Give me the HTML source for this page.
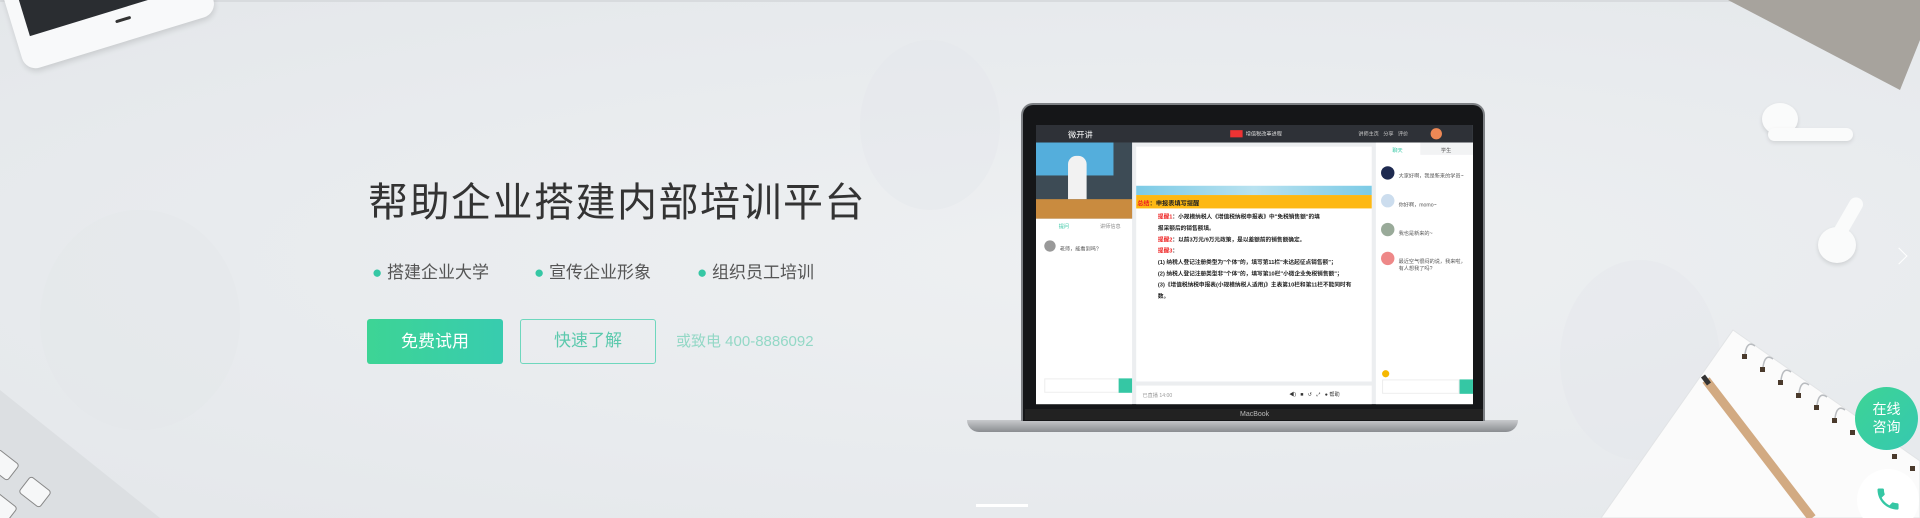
<!DOCTYPE html>
<html style="overflow:hidden;width:1920px;height:518px"><head><meta charset="utf-8"><style>
*{margin:0;padding:0;box-sizing:border-box}
html,body{width:1920px;height:518px;overflow:hidden}
body{background:#e9ecef;font-family:"Liberation Sans","Noto Sans CJK SC",sans-serif;position:relative}
#w{position:absolute;left:0;top:0;width:1920px;height:518px;overflow:hidden}
.a{position:absolute}
.t{font-size:5px;color:#555;white-space:nowrap}
</style></head><body><div id="w">
<div class="a" style="left:0;top:0;width:1920px;height:518px;background:radial-gradient(ellipse at 60% 50%,#eef0f2 0%,#e7eaed 70%,#e4e7ea 100%)"></div>
<div class="a" style="left:0;top:0;width:1920px;height:2px;background:#d8dbde"></div>
<div class="a" style="left:40px;top:210px;width:200px;height:220px;border-radius:50%;background:#e4e7ea;opacity:.5"></div>
<div class="a" style="left:860px;top:40px;width:140px;height:170px;border-radius:50%;background:#e4e7ea;opacity:.4"></div>
<div class="a" style="left:1560px;top:260px;width:160px;height:200px;border-radius:50%;background:#e4e7ea;opacity:.4"></div>
<!-- phone -->
<div class="a" style="left:5px;top:-70px;width:200px;height:115px;background:#f8f9fa;border-radius:14px;transform:rotate(-17deg);box-shadow:0 3px 6px rgba(0,0,0,.12)">
 <div class="a" style="left:14px;top:12px;width:160px;height:70px;background:#2a2d31"></div>
 <div class="a" style="left:100px;top:92px;width:16px;height:3px;background:#333;border-radius:2px"></div>
</div>
<!-- svg scenery -->
<svg class="a" style="left:0;top:0" width="1920" height="518">
 <polygon points="1728,0 1920,0 1920,40 1900,90" fill="#a7a39d"/>
 <polygon points="0,390 160,518 0,518" fill="#dcdfe2"/>
 <g fill="#f6f7f8" stroke="#888" stroke-width="1">
  <rect x="-10" y="455" width="26" height="20" rx="3" transform="rotate(38 3 465)"/>
  <rect x="22" y="482" width="26" height="20" rx="3" transform="rotate(38 35 492)"/>
  <rect x="-12" y="498" width="26" height="20" rx="3" transform="rotate(38 1 508)"/>
 </g>
 <polygon points="1733,330 1920,461 1920,518 1601,518" fill="#fbfbfb" stroke="#e2e4e6"/>
 <g fill="#4a3a2c">
  <rect x="1742" y="354" width="5" height="5"/><rect x="1760" y="367" width="5" height="5"/>
  <rect x="1778" y="380" width="5" height="5"/><rect x="1796" y="393" width="5" height="5"/>
  <rect x="1814" y="405" width="5" height="5"/><rect x="1832" y="418" width="5" height="5"/>
  <rect x="1850" y="430" width="5" height="5"/><rect x="1892" y="454" width="5" height="5"/>
  <rect x="1910" y="466" width="5" height="5"/>
 </g>
 <g fill="none" stroke="#b9bcc0" stroke-width="1.5">
  <path d="M1745,354 q2,-14 10,-8"/><path d="M1763,367 q2,-14 10,-8"/><path d="M1781,380 q2,-14 10,-8"/>
  <path d="M1799,393 q2,-14 10,-8"/><path d="M1817,405 q2,-14 10,-8"/><path d="M1835,418 q2,-14 10,-8"/>
 </g>
 <line x1="1706" y1="380" x2="1812" y2="518" stroke="#d2aa82" stroke-width="9"/>
 <line x1="1703" y1="376" x2="1709" y2="384" stroke="#333" stroke-width="5"/>
 <circle cx="1888" cy="500" r="31" fill="#fff"/>
 <path transform="translate(1874,485) scale(1.17)" d="M6.6 10.8c1.4 2.8 3.8 5.1 6.6 6.6l2.2-2.2c.3-.3.7-.4 1-.2 1.1.4 2.3.6 3.6.6.6 0 1 .4 1 1V20c0 .6-.4 1-1 1C10.6 21 3 13.4 3 4c0-.6.4-1 1-1h3.5c.6 0 1 .4 1 1 0 1.3.2 2.5.6 3.6.1.3 0 .7-.2 1z" fill="#35c7a4"/>
</svg>
<!-- earbuds -->
<div class="a" style="left:1762px;top:103px;width:36px;height:32px;border-radius:50%;background:#fafbfb;box-shadow:0 2px 4px rgba(0,0,0,.12)"></div>
<div class="a" style="left:1768px;top:128px;width:85px;height:13px;border-radius:7px;background:#fafbfb;box-shadow:0 2px 4px rgba(0,0,0,.1)"></div>
<div class="a" style="left:1818px;top:227px;width:38px;height:36px;border-radius:50%;background:#fafbfb;box-shadow:0 2px 4px rgba(0,0,0,.12)"></div>
<div class="a" style="left:1840px;top:195px;width:14px;height:50px;border-radius:7px;background:#fafbfb;transform:rotate(30deg)"></div>
<!-- text -->
<div class="a" style="left:368px;top:170px;font-size:40px;color:#333;letter-spacing:1.5px;white-space:nowrap">帮助企业搭建内部培训平台</div>
<div class="a" style="left:372px;top:258px;font-size:17px;color:#555;white-space:nowrap"><span style="color:#35c7a4">●</span> 搭建企业大学</div>
<div class="a" style="left:534px;top:258px;font-size:17px;color:#555;white-space:nowrap"><span style="color:#35c7a4">●</span> 宣传企业形象</div>
<div class="a" style="left:697px;top:258px;font-size:17px;color:#555;white-space:nowrap"><span style="color:#35c7a4">●</span> 组织员工培训</div>
<div class="a" style="left:367px;top:319px;width:136px;height:45px;border-radius:3px;background:linear-gradient(90deg,#3dd495,#38ccaf);color:#fff;font-size:17px;text-align:center;line-height:45px">免费试用</div>
<div class="a" style="left:520px;top:319px;width:136px;height:45px;border-radius:3px;border:1.5px solid #6ed7bd;color:#5cc9ad;font-size:17px;text-align:center;line-height:42px">快速了解</div>
<div class="a" style="left:676px;top:330px;font-size:15px;color:#93d8c6;white-space:nowrap">或致电 400-8886092</div>
<!-- laptop -->
<div class="a" style="left:967px;top:420px;width:551px;height:12px;background:linear-gradient(#c8cacd,#8a8d91);border-radius:0 0 30px 30px"></div>
<div class="a" style="left:1021px;top:103px;width:464px;height:318px;background:#151618;border-radius:12px 12px 0 0;border:2px solid #7d8084;border-bottom:none"></div>
<div class="a" style="left:1025px;top:409px;width:458px;height:11px;background:#222"></div>
<div class="a t" style="left:1240px;top:411px;color:#bbb;font-size:7px">MacBook</div>
<div class="a" style="left:0;top:0;width:1920px;height:518px;transform-origin:1033px 126px;transform:translate(3px,-1px) scale(1.033,1.03)">
<div class="a" style="left:1033px;top:126px;width:423px;height:271px;background:#eceef0"></div>
<div class="a" style="left:1033px;top:126px;width:423px;height:17px;background:#2e3137"></div>
<div class="a t" style="left:1064px;top:130px;color:#fff;font-size:8px">微开讲</div>
<div class="a" style="left:1221px;top:131px;width:12px;height:7px;background:#e33"></div>
<div class="a t" style="left:1236px;top:131px;color:#ddd">增值税改革进程</div>
<div class="a t" style="left:1345px;top:131px;color:#ccc">讲师主页 &nbsp; 分享 &nbsp; 评价</div>
<div class="a" style="left:1415px;top:129px;width:11px;height:11px;border-radius:50%;background:#e85"></div>
<div class="a" style="left:1033px;top:143px;width:93px;height:74px;background:#3d4b55"></div>
<div class="a" style="left:1033px;top:143px;width:75px;height:32px;background:#54aedc"></div>
<div class="a" style="left:1033px;top:198px;width:93px;height:19px;background:#c98b3f"></div>
<div class="a" style="left:1064px;top:156px;width:18px;height:42px;background:#f2f2f2;border-radius:8px 8px 0 0"></div>
<div class="a" style="left:1033px;top:217px;width:93px;height:180px;background:#fff"></div>
<div class="a t" style="left:1055px;top:221px;color:#35c7a4">提问</div>
<div class="a t" style="left:1095px;top:221px;color:#888">讲师信息</div>
<div class="a" style="left:1041px;top:238px;width:11px;height:11px;border-radius:50%;background:#999"></div>
<div class="a t" style="left:1056px;top:243px">老师，能看到吗?</div>
<div class="a" style="left:1041px;top:372px;width:73px;height:14px;border:1px solid #eee"></div>
<div class="a" style="left:1113px;top:372px;width:13px;height:14px;background:#35c7a4"></div>
<div class="a" style="left:1130px;top:147px;width:228px;height:228px;background:#fff"></div>
<div class="a" style="left:1130px;top:185px;width:228px;height:9px;background:linear-gradient(90deg,#7ccbe6,#b9e2f0,#7ccbe6)"></div>
<div class="a" style="left:1130px;top:194px;width:228px;height:13px;background:#fdb813"></div>
<div class="a t" style="left:1131px;top:197px;color:#222;font-size:6px;font-weight:bold"><span style="color:#e22">总结</span>：申报表填写提醒</div>
<div class="a t" style="left:1151px;top:211px;color:#222;font-size:5.5px;line-height:11px;font-weight:bold"><span style="color:#e22">提醒1</span>：小规模纳税人《增值税纳税申报表》中"免税销售额"的填<br>报采额后的销售额填。<br><span style="color:#e22">提醒2</span>：以前3万元/9万元政策，是以差额前的销售额确定。<br><span style="color:#e22">提醒3</span>：<br>(1) 纳税人登记注册类型为"个体"的，填写第11栏"未达起征点销售额"；<br>(2) 纳税人登记注册类型非"个体"的，填写第10栏"小微企业免税销售额"；<br>(3)《增值税纳税申报表(小规模纳税人适用)》主表第10栏和第11栏不能同时有<br>数。</div>
<div class="a" style="left:1130px;top:379px;width:228px;height:18px;background:#fff"></div>
<div class="a t" style="left:1136px;top:385px;color:#999">已直播 14:00</div>
<div class="a t" style="left:1278px;top:384px;color:#333">◀) &nbsp; ■ &nbsp; ↺ &nbsp; ⤢ &nbsp; ● 帮助</div>
<div class="a" style="left:1362px;top:143px;width:94px;height:254px;background:#fff"></div>
<div class="a" style="left:1405px;top:143px;width:51px;height:12px;background:#f2f3f4"></div>
<div class="a t" style="left:1378px;top:147px;color:#35c7a4">聊天</div>
<div class="a t" style="left:1425px;top:147px">学生</div>
<div class="a" style="left:1367px;top:166px;width:13px;height:13px;border-radius:50%;background:#1e2a50"></div>
<div class="a t" style="left:1384px;top:172px">大家好啊，我是新来的学员~</div>
<div class="a" style="left:1367px;top:193px;width:13px;height:13px;border-radius:50%;background:#cde"></div>
<div class="a t" style="left:1384px;top:200px">你好啊，momo~</div>
<div class="a" style="left:1367px;top:221px;width:13px;height:13px;border-radius:50%;background:#9a9"></div>
<div class="a t" style="left:1384px;top:228px">我也是新来的~</div>
<div class="a" style="left:1367px;top:249px;width:13px;height:13px;border-radius:50%;background:#e88"></div>
<div class="a t" style="left:1384px;top:256px;line-height:7px">最近空气很闷的说，我来啦，<br>有人想我了吗?</div>
<div class="a" style="left:1368px;top:364px;width:7px;height:7px;border-radius:50%;background:#f5b800"></div>
<div class="a" style="left:1368px;top:373px;width:75px;height:14px;border:1px solid #eee"></div>
<div class="a" style="left:1443px;top:373px;width:13px;height:14px;background:#35c7a4"></div>
</div>
<div class="a" style="left:976px;top:504px;width:52px;height:3px;background:#fff"></div>
<div class="a" style="left:1893px;top:250px;width:12px;height:12px;border-right:1px solid #fff;border-top:1px solid #fff;transform:rotate(45deg)"></div>
<div class="a" style="left:1855px;top:387px;width:63px;height:63px;border-radius:50%;background:linear-gradient(135deg,#3dd495,#36c8b0);color:#fff;font-size:14px;line-height:18px;text-align:center;padding-top:13px">在线<br>咨询</div>
</div></body></html>
